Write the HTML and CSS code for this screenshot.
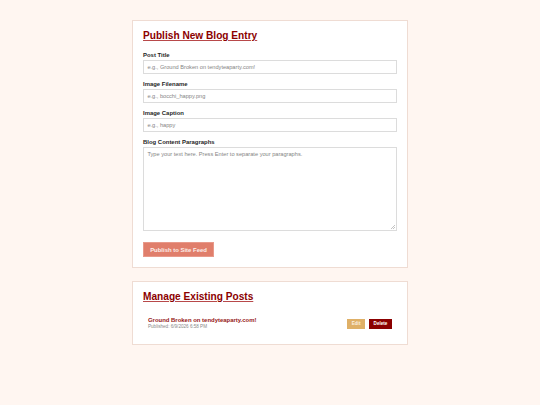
FILE: index.html
```html
<!DOCTYPE html>
<html lang="en">
<head>
<meta charset="utf-8">
<title>Blog Admin</title>
<link rel="stylesheet" href="styles.css">
</head>
<body>
<main class="page">
  <section class="card">
    <h2 class="card-title">Publish New Blog Entry</h2>
    <form class="form">
      <div class="field">
        <label class="label" for="title">Post Title</label>
        <input class="input" id="title" type="text" placeholder="e.g., Ground Broken on tendyteaparty.com!">
      </div>
      <div class="field">
        <label class="label" for="image">Image Filename</label>
        <input class="input" id="image" type="text" placeholder="e.g., bocchi_happy.png">
      </div>
      <div class="field">
        <label class="label" for="caption">Image Caption</label>
        <input class="input" id="caption" type="text" placeholder="e.g., happy">
      </div>
      <div class="field">
        <label class="label" for="content">Blog Content Paragraphs</label>
        <textarea class="input textarea" id="content" placeholder="Type your text here. Press Enter to separate your paragraphs."></textarea>
      </div>
      <button class="btn btn-publish" type="button">Publish to Site Feed</button>
    </form>
  </section>

  <section class="card card-manage">
    <h2 class="card-title">Manage Existing Posts</h2>
    <ul class="post-list">
      <li class="post-item">
        <div class="post-info">
          <div class="post-title">Ground Broken on tendyteaparty.com!</div>
          <div class="post-date">Published: 6/9/2026 6:58 PM</div>
        </div>
        <div class="post-actions">
          <button class="btn btn-small btn-edit" type="button">Edit</button>
          <button class="btn btn-small btn-delete" type="button">Delete</button>
        </div>
      </li>
    </ul>
  </section>
</main>
</body>
</html>
```
FILE: styles.css
```css
* {
  box-sizing: border-box;
}

html, body {
  margin: 0;
  padding: 0;
  background: #fff6f1;
}

body {
  font-family: "Liberation Sans", Arial, sans-serif;
  color: #333;
}

.page {
  padding-top: 20px;
  display: flex;
  flex-direction: column;
  align-items: center;
  gap: 13px;
}

.card {
  width: 276px;
  background: #ffffff;
  border: 1px solid #efdcd3;
  padding: 9px 10px 10px;
}

.card-title {
  margin: 0 0 9.5px;
  font-size: 10.15px;
  line-height: 12px;
  font-weight: bold;
  color: #8b0000;
  text-decoration: underline;
  text-decoration-color: #b8494a;
  text-underline-offset: 1px;
}

.form {
  display: flex;
  flex-direction: column;
}

.field {
  display: flex;
  flex-direction: column;
  margin-bottom: 6.5px;
}

.label {
  display: block;
  font-size: 5.95px;
  line-height: 7px;
  font-weight: bold;
  color: #1f1f1f;
  margin-bottom: 1.5px;
}

.input {
  width: 100%;
  height: 14px;
  margin: 0;
  padding: 0 3.4px;
  border: 1px solid #dcdcdc;
  border-radius: 0;
  font-family: "Liberation Sans", Arial, sans-serif;
  font-size: 5.65px;
  color: #333;
  background: #fff;
  outline: none;
}

.input::placeholder {
  color: #858585;
}

.textarea {
  height: 84px;
  padding: 3.4px;
  resize: none;
  line-height: 6.5px;
  background-color: #fff;
  background-image:
    linear-gradient(135deg, transparent 0 46%, #c4c4c4 46% 56%, transparent 56% 70%, #c4c4c4 70% 80%, transparent 80%);
  background-size: 4px 4px;
  background-position: right 1px bottom 1px;
  background-repeat: no-repeat;
}

.btn {
  font-family: "Liberation Sans", Arial, sans-serif;
  font-weight: bold;
  border: none;
  border-radius: 0;
  cursor: pointer;
  color: #fff;
  margin: 0;
}

.btn-publish {
  align-self: flex-start;
  margin-top: 4.5px;
  width: 71px;
  height: 15px;
  padding: 0;
  font-size: 5.95px;
  background: #e07e6b;
  border: 1px solid #e8998a;
  color: #fdeeea;
}

.post-list {
  list-style: none;
  margin: 0;
  padding: 0;
}

.post-item {
  display: flex;
  align-items: center;
  justify-content: space-between;
  padding: 4.5px 5px 3.5px;
}

.post-title {
  font-size: 5.95px;
  line-height: 7px;
  font-weight: bold;
  color: #961616;
}

.post-date {
  font-size: 4.6px;
  line-height: 6px;
  color: #888;
}

.post-actions {
  display: flex;
  gap: 4px;
}

.btn-small {
  height: 10px;
  padding: 0 4.6px;
  font-size: 4.6px;
}

.btn-edit {
  background: #dfb067;
  color: #fbf1e0;
}

.btn-delete {
  background: #8b0000;
  color: #fff;
}
```
